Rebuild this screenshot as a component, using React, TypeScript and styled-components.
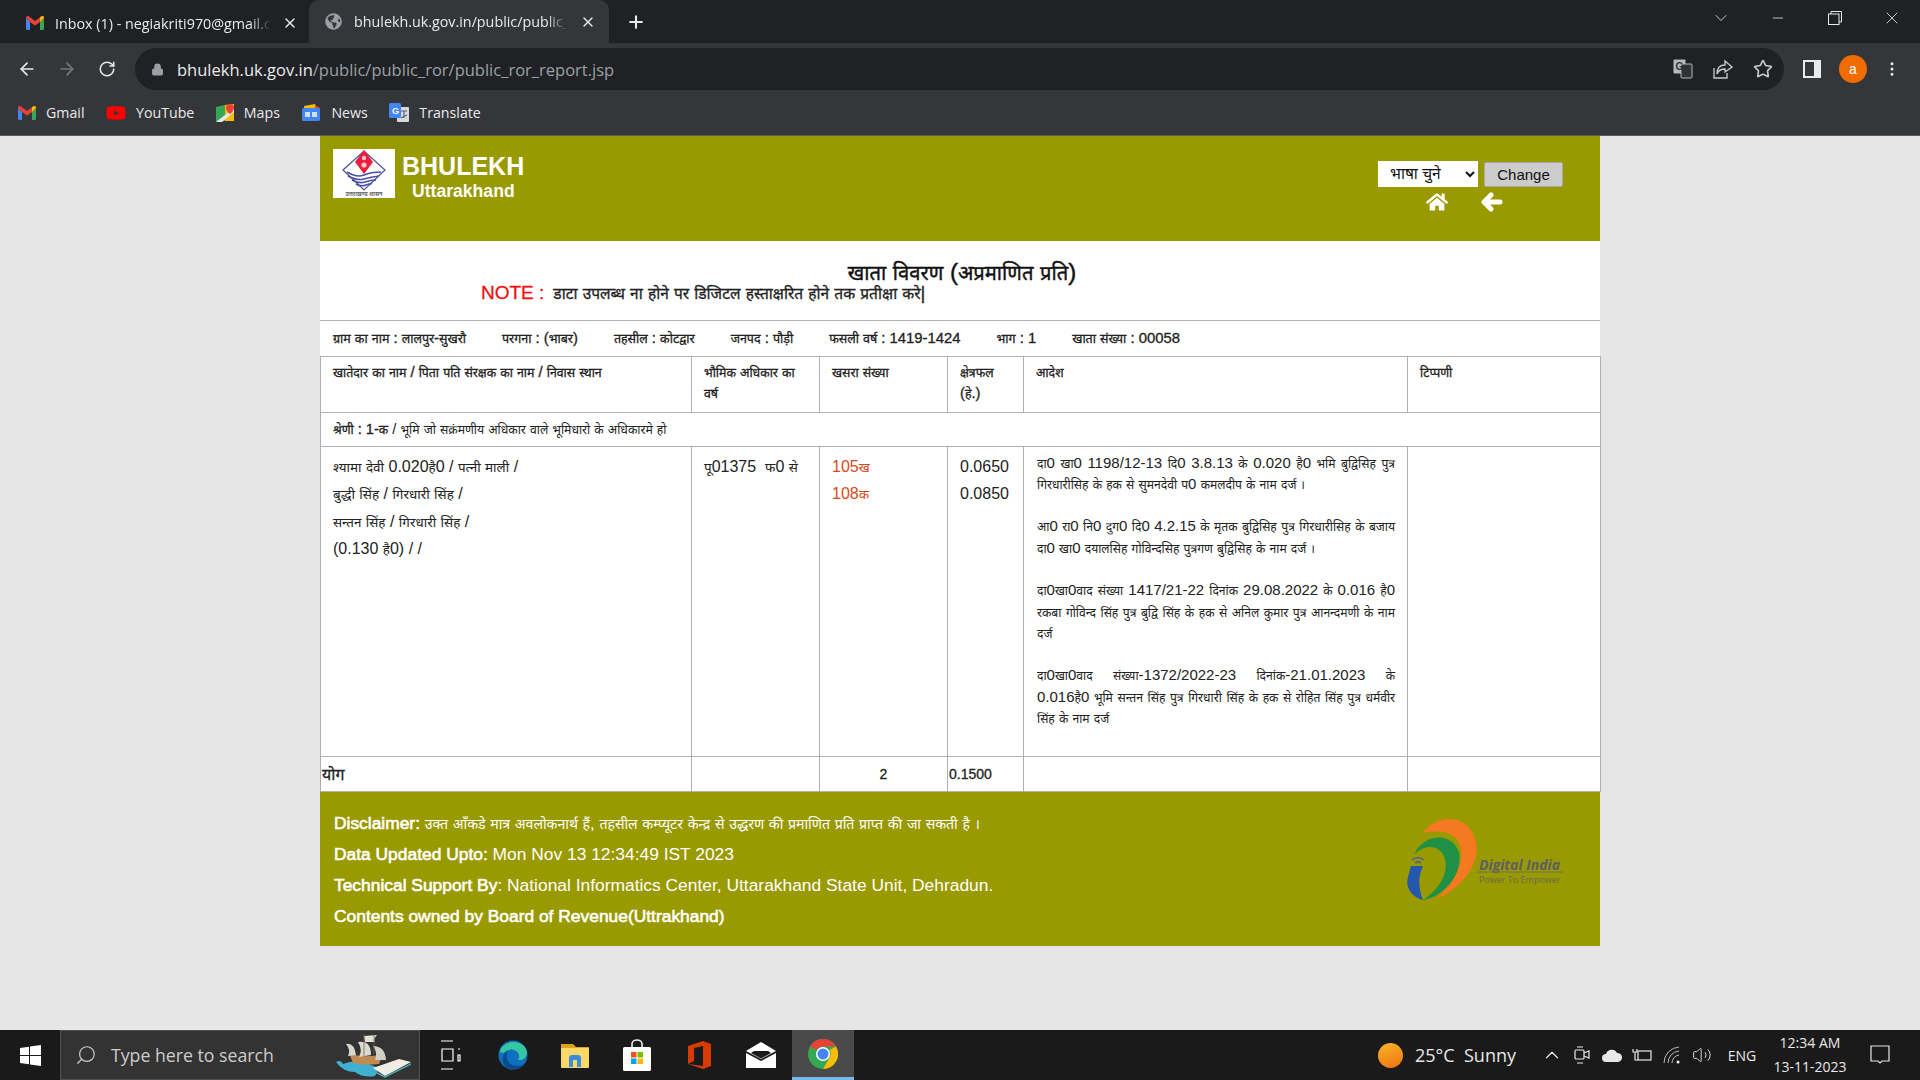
import React from "react";
import styled, { createGlobalStyle } from "styled-components";
import { ArrowLeft, ArrowRight, RotateCw, Star, X, Plus, ChevronDown, ChevronUp, Minus, Search, Lock, MoreVertical, Volume2 } from "lucide-react";
import { FaHome, FaYoutube, FaGlobeAmericas } from "react-icons/fa";

const OLIVE = "#999900";
const LINE = "#b0b0b0";
const HINDI = `"Liberation Sans", Arial, "Noto Sans Devanagari", "Lohit Devanagari", "Noto Sans", sans-serif`;
const UI = `"Open Sans", "Noto Sans", sans-serif`;

const Global = createGlobalStyle`
  html, body { margin: 0; padding: 0; height: 1080px; overflow: hidden; background: #e6e6e6; }
  * { box-sizing: border-box; }
`;

const Screen = styled.div`
  width: 1920px;
  height: 1080px;
  display: flex;
  flex-direction: column;
  font-family: ${HINDI};
`;

// the fallback Devanagari face runs wider than the one in the shot
const Deva = styled.span`
  font-size: 0.84em;
  line-height: 0;
`;

const Hi = ({ t }: { t: string }) => (
  <>
    {t.split(/([\u0900-\u097F]+)/).map((part, i) =>
      i % 2 ? <Deva key={i}>{part}</Deva> : part
    )}
  </>
);

/* browser frame */
const TabStrip = styled.div`
  height: 43px;
  background: #202124;
  display: flex;
  align-items: flex-end;
  color: #e8eaed;
  font-family: ${UI};
`;

const Tab = styled.div<{ $active?: boolean }>`
  width: ${(p) => (p.$active ? "300px" : "305px")};
  height: ${(p) => (p.$active ? "43px" : "40px")};
  margin-right: ${(p) => (p.$active ? "17px" : "4px")};
  display: flex;
  align-items: center;
  gap: ${(p) => (p.$active ? "12px" : "11px")};
  padding-left: ${(p) => (p.$active ? "16px" : "26px")};
  padding-right: ${(p) => (p.$active ? "13px" : "7px")};
  border-radius: 10px 10px 0 0;
  background: ${(p) => (p.$active ? "#35363a" : "transparent")};
  font-size: 14.3px;
`;

const TabTitle = styled.span`
  flex: 1;
  overflow: hidden;
  white-space: nowrap;
  -webkit-mask-image: linear-gradient(to right, #000 90%, transparent);
  mask-image: linear-gradient(to right, #000 90%, transparent);
`;

const StripSpacer = styled.div`
  flex: 1;
`;

const WindowControls = styled.div`
  height: 36px;
  align-self: flex-start;
  display: flex;
  align-items: center;
  color: #e8eaed;
`;

const WindowButton = styled.div`
  width: 57px;
  display: flex;
  justify-content: center;
`;

const Toolbar = styled.div`
  height: 48px;
  background: #35363a;
  display: flex;
  align-items: center;
  padding: 4px 0 0 7px;
  color: #e8eaed;
`;

const NavButton = styled.div<{ $dim?: boolean }>`
  width: 40px;
  display: flex;
  justify-content: center;
  color: ${(p) => (p.$dim ? "#75777b" : "#e8eaed")};
`;

const Omnibox = styled.div`
  width: 1649px;
  height: 42px;
  margin-left: 8px;
  border-radius: 21px;
  background: #202124;
  display: flex;
  align-items: center;
  padding: 0 1px 0 16px;
  gap: 13px;
  font-family: ${UI};
  font-size: 16.5px;
  color: #9aa0a6;
`;

const Url = styled.div`
  flex: 1;
  white-space: nowrap;
  & b {
    font-weight: 400;
    color: #e8eaed;
  }
`;

const OmniIcons = styled.div`
  display: flex;
`;

const OmniIcon = styled.div`
  width: 40px;
  display: flex;
  justify-content: center;
  color: #c4c7c5;
`;

const ToolbarEnd = styled.div`
  flex: 1;
  display: flex;
  align-items: center;
  padding-left: 19px;
`;

const Avatar = styled.div`
  width: 28px;
  height: 28px;
  margin: 0 16px 0 18px;
  border-radius: 50%;
  background: #f06c00;
  color: #fff;
  font-size: 14px;
  display: flex;
  align-items: center;
  justify-content: center;
`;

const BookmarkBar = styled.div`
  height: 44.5px;
  background: #35363a;
  border-bottom: 1px solid #5a5b5f;
  display: flex;
  align-items: center;
  padding-left: 18px;
  gap: 21.5px;
  color: #e8eaed;
  font-family: ${UI};
  font-size: 14.2px;
`;

const Bookmark = styled.div`
  display: flex;
  align-items: center;
  gap: 10px;
`;

/* page */
const Page = styled.main`
  flex: 1;
  display: flex;
  justify-content: center;
  background: #e6e6e6;
`;

const Sheet = styled.div`
  width: 1280px;
  align-self: flex-start;
  background: #fff;
`;

const Banner = styled.header`
  height: 105px;
  background: ${OLIVE};
  display: flex;
  justify-content: space-between;
  padding: 13px 37px 0 13px;
`;

const Brand = styled.div`
  display: flex;
  gap: 7px;
  color: #fff;
  font-weight: 700;
`;

const Crest = styled.div`
  width: 62px;
  height: 49px;
  background: #fff;
  display: flex;
  justify-content: center;
`;

const BrandName = styled.div`
  font-size: 25px;
  line-height: 30px;
  margin-top: 2px;
`;

const BrandState = styled.div`
  font-size: 17.6px;
  line-height: 20px;
  margin-left: 10px;
`;

const LangBlock = styled.div`
  width: 185px;
  padding-top: 12px;
`;

const LangRow = styled.div`
  display: flex;
  gap: 6px;
  align-items: flex-end;
`;

const LangSelect = styled.select`
  width: 100px;
  height: 26px;
  border: 0;
  background: #fff;
  color: #111;
  font-family: ${HINDI};
  font-size: 15.5px;
  padding-left: 8px;
`;

const ChangeButton = styled.button`
  width: 79px;
  height: 25px;
  padding: 0;
  background: #ccc;
  border: 1px solid #aaa;
  border-radius: 2px;
  color: #111;
  font-family: "Liberation Sans", sans-serif;
  font-size: 15px;
`;

const BannerIcons = styled.div`
  display: flex;
  align-items: center;
  gap: 33px;
  margin: 4px 0 0 48px;
  color: #fff;
  font-size: 22px;
`;

const TitleBlock = styled.section`
  height: 80px;
  padding-top: 19px;
  border-bottom: 1px solid ${LINE};
`;

const Title = styled.h1`
  margin: 0;
  padding-left: 4px;
  text-align: center;
  font-size: 24px;
  line-height: 24px;
  font-weight: 400;
  -webkit-text-stroke: 0.4px #111;
  color: #111;
`;

const Note = styled.div`
  padding-left: 161px;
  display: flex;
  align-items: center;
  gap: 9px;
  font-size: 18.5px;
  line-height: 18px;
  color: #222;
  -webkit-text-stroke: 0.3px #222;
  & b {
    font-weight: 400;
    color: #f01010;
    -webkit-text-stroke: 0.3px #f01010;
    font-size: 19px;
  }
`;

const InfoRow = styled.div`
  height: 35px;
  padding-left: 13px;
  display: flex;
  align-items: center;
  gap: 36px;
  font-size: 14.85px;
  color: #222;
  -webkit-text-stroke: 0.3px #222;
`;

const Grid = styled.table`
  width: 1280px;
  table-layout: fixed;
  border-collapse: collapse;
  color: #222;
`;

const HeadCell = styled.th<{ $w: number }>`
  width: ${(p) => p.$w}px;
  height: 56px;
  padding: 5px 12px;
  border: 1px solid ${LINE};
  vertical-align: top;
  text-align: left;
  font-size: 14.7px;
  line-height: 21px;
  font-weight: 400;
  -webkit-text-stroke: 0.3px #222;
`;

const CategoryCell = styled.td`
  height: 34px;
  padding: 0 12px;
  border: 1px solid ${LINE};
  font-size: 14.6px;
  & b {
    font-weight: 400;
    -webkit-text-stroke: 0.3px #222;
  }
`;

const BodyCell = styled.td<{ $accent?: boolean }>`
  height: 310px;
  padding: 6px 13px 6px 12px;
  border: 1px solid ${LINE};
  vertical-align: top;
  font-size: 16px;
  line-height: 27.5px;
  color: ${(p) => (p.$accent ? "#d9481c" : "#222")};
`;

const OrderCell = styled.td`
  padding: 5px 12px 5px 13px;
  border: 1px solid ${LINE};
  vertical-align: top;
  font-size: 15px;
  line-height: 21.3px;
  text-align: justify;
  color: #222;
`;

const OrderText = styled.p`
  margin: 0 0 21.3px;
  & span {
    font-size: 0.81em;
  }
`;

const TotalCell = styled.td<{ $center?: boolean; $tight?: boolean; $big?: boolean }>`
  height: 35px;
  padding: 0 ${(p) => (p.$tight ? "1px" : "12px")};
  border: 1px solid ${LINE};
  font-size: ${(p) => (p.$big ? "19px" : "14px")};
  font-weight: 400;
  -webkit-text-stroke: 0.3px #222;
  text-align: ${(p) => (p.$center ? "center" : "left")};
`;

const Footer = styled.footer`
  height: 154px;
  background: ${OLIVE};
  display: flex;
  justify-content: space-between;
  padding: 16px 37px 0 14px;
  color: #fff;
  font-size: 17.4px;
  line-height: 31.2px;
`;

const FooterNote = styled.div`
  & b {
    font-weight: 400;
    -webkit-text-stroke: 0.6px #fff;
  }
`;

const Disclaimer = styled.span`
  font-size: 0.965em;
`;

const DigitalLogo = styled.svg`
  width: 156px;
  height: 84px;
  margin-top: 9px;
`;

/* taskbar */
const Taskbar = styled.div`
  height: 50px;
  background: #1a1a1a;
  display: flex;
  align-items: stretch;
  color: #e8e8e8;
  font-family: ${UI};
`;

const StartButton = styled.div`
  width: 60px;
  display: flex;
  align-items: center;
  justify-content: center;
`;

const SearchBox = styled.div`
  width: 360px;
  background: #333;
  border: 1px solid #505050;
  display: flex;
  align-items: center;
  padding: 0 8px 0 14px;
  gap: 14px;
  color: #ccc;
  font-size: 17.7px;
`;

const SearchHint = styled.span`
  flex: 1;
`;

const TaskSlot = styled.div<{ $active?: boolean }>`
  width: 62px;
  display: flex;
  align-items: center;
  justify-content: center;
  background: ${(p) => (p.$active ? "#4a4a4a" : "transparent")};
  border-bottom: ${(p) => (p.$active ? "3px solid #76b9ed" : "0")};
`;

const Tray = styled.div`
  flex: 1;
  display: flex;
  align-items: center;
  padding-left: 524px;
`;

const TrayWeather = styled.div`
  display: flex;
  align-items: center;
  width: 159px;
  font-size: 18px;
  gap: 12px;
`;

const Sun = styled.div`
  width: 25px;
  height: 25px;
  border-radius: 50%;
  background: linear-gradient(160deg, #f5b82a, #f0700f);
`;

const TrayIcon = styled.div`
  width: 30px;
  display: flex;
  justify-content: center;
  color: #e8e8e8;
`;

const TrayLang = styled.div`
  width: 50px;
  text-align: center;
  font-size: 14px;
`;

const Clock = styled.div`
  width: 86px;
  text-align: center;
  font-size: 14px;
  line-height: 24px;
`;

const Notify = styled.div`
  margin-left: 17px;
  display: flex;
`;

const GmailMark = () => (
  <svg width="18" height="14" viewBox="0 0 18 14">
    <path d="M0 2 V12.5 Q0 14 1.5 14 H4 V6 Z" fill="#4285f4" />
    <path d="M18 2 V12.5 Q18 14 16.5 14 H14 V6 Z" fill="#34a853" />
    <path d="M0 2 Q0 -1 3 .5 L9 5 L15 .5 Q18 -1 18 2 L14 6 L9 9.5 L4 6 Z" fill="#ea4335" />
    <path d="M14 1.5 L15 .5 Q18 -1 18 2 L14 6 Z" fill="#fbbc04" />
  </svg>
);

const MapsMark = () => (
  <svg width="18" height="18" viewBox="0 0 18 18">
    <path d="M0 3 L9 1 V17 L0 18 Z" fill="#34a853" />
    <path d="M9 1 L18 0 V17 L9 17 Z" fill="#fbbc04" />
    <path d="M0 18 L18 4 V8 L6 18 Z" fill="#e8eaed" />
    <path d="M14 0 a4 4 0 0 1 4 4 c0 3 -4 6 -4 6 s-4 -3 -4 -6 a4 4 0 0 1 4 -4" fill="#ea4335" />
  </svg>
);

const NewsMark = () => (
  <svg width="20" height="18" viewBox="0 0 20 18">
    <path d="M3 2 L14 0 L16 4 H3 Z" fill="#fbbc04" />
    <path d="M14 1 L19 4 V8 H14 Z" fill="#ea4335" />
    <rect x="1" y="4" width="18" height="13" rx="1.5" fill="#4285f4" />
    <rect x="4" y="8" width="5" height="5" fill="#cfe0fb" />
    <rect x="11" y="8" width="5" height="5" fill="#cfe0fb" />
  </svg>
);

const TranslateMark = () => (
  <svg width="20" height="20" viewBox="0 0 20 20">
    <rect x="8" y="4" width="12" height="15" rx="1" fill="#d5d8dc" />
    <rect x="0" y="0" width="12" height="15" rx="1.5" fill="#4285f4" />
    <text x="3" y="11" fontSize="9" fontWeight="700" fill="#fff" fontFamily="Liberation Sans">G</text>
    <path d="M12 8 H18 M15 8 V15 M12 15 L18 12" stroke="#5f6368" strokeWidth="1.2" fill="none" />
  </svg>
);

const CrestMark = () => (
  <svg width="62" height="49" viewBox="0 0 62 49">
    <path d="M10 21 L31 2 L52 21 L31 41 Z" fill="none" stroke="#4a4f9a" strokeWidth="1.2" />
    <path d="M31 1 L40 13 L31 25 L22 13 Z" fill="#ee1c3a" />
    <circle cx="31" cy="9" r="2.2" fill="#f9c8cc" />
    <circle cx="31" cy="16" r="2.6" fill="#f9c8cc" />
    <path d="M14 23 Q24 29 31 26 T48 23 M15 27 Q24 32 31 30 T46 27 M19 31 Q26 35 32 33 T43 31 M23 35 Q28 38 33 36 T39 35" stroke="#4a4fa8" strokeWidth="1.6" fill="none" />
    <text x="31" y="47" textAnchor="middle" fontSize="5.5" fill="#666">उत्तराखण्ड शासन</text>
  </svg>
);

const BackArrow = () => (
  <svg width="22" height="20" viewBox="0 0 22 20" fill="none" stroke="#fff" strokeWidth="5" strokeLinecap="round" strokeLinejoin="round">
    <path d="M10 3 L3 10 L10 17 M4 10 H19" />
  </svg>
);

const WinLogo = () => (
  <svg width="21" height="21" viewBox="0 0 21 21" fill="#fff">
    <path d="M0 3 L9 1.7 V10 H0 Z M10 1.5 L21 0 V10 H10 Z M0 11 H9 V19.3 L0 18 Z M10 11 H21 V21 L10 19.5 Z" />
  </svg>
);

const ShipArt = () => (
  <svg width="78" height="46" viewBox="0 0 78 46">
    <path d="M3 30 Q8 27 10 32 Q20 28 30 30 L46 36 L42 44 Q30 46 22 40 Q10 40 3 30 Z" fill="#3fb0cf" />
    <path d="M16 21 Q30 27 50 22 L46 32 Q30 34 20 31 Z" fill="#c08a55" />
    <path d="M13 12 Q21 10 23 23 L15 24 Q18 18 13 12 Z" fill="#d8d5cc" />
    <path d="M25 10 Q38 8 38 23 L26 25 Q30 18 25 10 Z" fill="#dcd9d0" />
    <path d="M40 14 Q52 14 53 28 L42 28 Q45 21 40 14 Z" fill="#d2cfc6" />
    <path d="M31 4 L44 3 Q40 7 42 10 L32 10 Z" fill="#e4e1d8" />
    <path d="M31 2 V24 M41 3 V22" stroke="#7a6248" strokeWidth="0.8" />
    <path d="M40 36 L66 27 L78 30 L52 44 Z" fill="#f0eee2" />
    <path d="M42 40 L52 45 L78 32" stroke="#4fa8b8" strokeWidth="1.5" fill="none" />
  </svg>
);

const TaskViewIcon = () => (
  <svg width="24" height="32" viewBox="0 0 24 32" fill="none" stroke="#fff" strokeWidth="1.2">
    <path d="M2 2 H14 M2 30 H14 M3 10 H14 V22 H3 Z M19 10 H21 M19 16 H21 V22 H19 Z" />
  </svg>
);

const EdgeIcon = () => (
  <svg width="30" height="30" viewBox="0 0 30 30">
    <circle cx="15" cy="15" r="14.5" fill="#0f70bf" />
    <path d="M2 11 C5 1 22 -2 28 9 C31 16 26 21 20 20 C24 14 17 8 11 10 C6 12 4 15 2 11 Z" fill="#37c6a2" />
    <path d="M9 17 C9 25 18 28 26 24 C22 30 12 31 7 26 C3 21 4 14 10 10 C8 13 9 15 9 17 Z" fill="#0a4c8f" />
  </svg>
);

const FolderIcon = () => (
  <svg width="28" height="26" viewBox="0 0 28 26">
    <path d="M0 2 H12 L15 5 H28 V24 H0 Z" fill="#dfa218" />
    <rect x="0" y="6" width="28" height="20" rx="1" fill="#fbd968" />
    <path d="M8 25 V16 Q8 13 11 13 H17 Q20 13 20 16 V25 H16 V18 H12 V25 Z" fill="#3a8dde" />
  </svg>
);

const StoreIcon = () => (
  <svg width="28" height="32" viewBox="0 0 28 32">
    <path d="M9 8 V5 a5 4 0 0 1 10 0 V8" fill="none" stroke="#eee" strokeWidth="1.6" />
    <rect x="0" y="8" width="28" height="24" rx="1.5" fill="#fff" />
    <rect x="8" y="13" width="5.5" height="5.5" fill="#f25022" />
    <rect x="14.5" y="13" width="5.5" height="5.5" fill="#7fba00" />
    <rect x="8" y="19.5" width="5.5" height="5.5" fill="#00a4ef" />
    <rect x="14.5" y="19.5" width="5.5" height="5.5" fill="#ffb900" />
  </svg>
);

const OfficeIcon = () => (
  <svg width="23" height="28" viewBox="0 0 23 28">
    <path d="M0 5 L15 0 L23 3 V25 L15 28 L0 23 L15 25 V5 L6 7 V20 L0 23 Z" fill="#d83b01" />
  </svg>
);

const MailIcon = () => (
  <svg width="30" height="26" viewBox="0 0 30 26">
    <path d="M0 9 L15 0 L30 9 L15 17 Z" fill="#fff" />
    <path d="M0 11 L15 19 L30 11 V26 H0 Z" fill="#fff" />
    <path d="M5 11 L15 16.5 L25 11 L22 9 H8 Z" fill="#1a1a1a" />
  </svg>
);

const ChromeIcon = () => (
  <svg width="30" height="30" viewBox="0 0 30 30">
    <circle cx="15" cy="15" r="15" fill="#34a853" />
    <path d="M15 0 A15 15 0 0 1 28 7.5 H15 A7.5 7.5 0 0 0 8.5 11.2 L2 7.5 A15 15 0 0 1 15 0 Z" fill="#ea4335" />
    <path d="M28 7.5 A15 15 0 0 1 15 30 L21.5 18.7 A7.5 7.5 0 0 0 21.5 11 L28 7.5 Z" fill="#fbbc04" />
    <circle cx="15" cy="15" r="7" fill="#fff" />
    <circle cx="15" cy="15" r="5.5" fill="#4285f4" />
  </svg>
);

export default function App() {
  return (
    <Screen>
      <Global />
      <TabStrip>
        <Tab>
          <GmailMark />
          <TabTitle>Inbox (1) - negiakriti970@gmail.com</TabTitle>
          <X size={16} />
        </Tab>
        <Tab $active>
          <FaGlobeAmericas size={17} color="#9aa0a6" />
          <TabTitle>bhulekh.uk.gov.in/public/public_ror/</TabTitle>
          <X size={16} />
        </Tab>
        <Plus size={20} strokeWidth={2.5} style={{ marginBottom: 11 }} />
        <StripSpacer />
        <WindowControls>
          <WindowButton><ChevronDown size={20} strokeWidth={1} /></WindowButton>
          <WindowButton><Minus size={16} strokeWidth={1.2} /></WindowButton>
          <WindowButton>
            <svg width="14" height="14" viewBox="0 0 14 14" fill="none" stroke="#e8eaed">
              <rect x="0.5" y="3" width="10.5" height="10.5" />
              <path d="M3 3 V0.5 H13.5 V11 H11" />
            </svg>
          </WindowButton>
          <WindowButton><X size={20} strokeWidth={1} /></WindowButton>
        </WindowControls>
      </TabStrip>
      <Toolbar>
        <NavButton><ArrowLeft size={20} /></NavButton>
        <NavButton $dim><ArrowRight size={20} /></NavButton>
        <NavButton><RotateCw size={18} /></NavButton>
        <Omnibox>
          <Lock size={13} fill="#9aa0a6" />
          <Url><b>bhulekh.uk.gov.in</b>/public/public_ror/public_ror_report.jsp</Url>
          <OmniIcons>
            <OmniIcon>
              <svg width="20" height="20" viewBox="0 0 20 20">
                <rect x="0.5" y="0.5" width="12" height="14" rx="1" fill="#b5b8bc" />
                <rect x="8" y="5" width="11" height="14" rx="1" fill="#303134" stroke="#b5b8bc" />
                <text x="2.5" y="11" fontSize="10" fontWeight="700" fill="#303134" fontFamily="Liberation Sans">G</text>
              </svg>
            </OmniIcon>
            <OmniIcon>
              <svg width="20" height="20" viewBox="0 0 20 20" fill="none" stroke="#c4c7c5" strokeWidth="1.4">
                <path d="M1 9 V19 H14 V14" />
                <path d="M12 2 L19 8 L12 13 V10 Q6 10 4 15 Q4 6 12 6 Z" />
              </svg>
            </OmniIcon>
            <OmniIcon><Star size={20} strokeWidth={2} /></OmniIcon>
          </OmniIcons>
        </Omnibox>
        <ToolbarEnd>
          <svg width="18" height="18" viewBox="0 0 18 18">
            <rect width="18" height="18" fill="#e8eaed" />
            <rect x="2" y="2" width="9" height="14" fill="#35363a" />
          </svg>
          <Avatar>a</Avatar>
          <MoreVertical size={18} />
        </ToolbarEnd>
      </Toolbar>
      <BookmarkBar>
        <Bookmark><GmailMark />Gmail</Bookmark>
        <Bookmark><FaYoutube size={20} color="#f00" />YouTube</Bookmark>
        <Bookmark><MapsMark />Maps</Bookmark>
        <Bookmark><NewsMark />News</Bookmark>
        <Bookmark><TranslateMark />Translate</Bookmark>
      </BookmarkBar>

      <Page>
        <Sheet>
          <Banner>
            <Brand>
              <Crest><CrestMark /></Crest>
              <div>
                <BrandName>BHULEKH</BrandName>
                <BrandState>Uttarakhand</BrandState>
              </div>
            </Brand>
            <LangBlock>
              <LangRow>
                <LangSelect><option>भाषा चुने</option></LangSelect>
                <ChangeButton>Change</ChangeButton>
              </LangRow>
              <BannerIcons><FaHome /><BackArrow /></BannerIcons>
            </LangBlock>
          </Banner>

          <TitleBlock>
            <Title><Hi t="खाता विवरण (अप्रमाणित प्रति)" /></Title>
            <Note><b>NOTE :</b> <span><Hi t="डाटा उपलब्ध ना होने पर डिजिटल हस्ताक्षरित होने तक प्रतीक्षा करे|" /></span></Note>
          </TitleBlock>

          <InfoRow>
            <span><Hi t="ग्राम का नाम : लालपुर-सुखरौ" /></span>
            <span><Hi t="परगना : (भाबर)" /></span>
            <span><Hi t="तहसील : कोटद्वार" /></span>
            <span><Hi t="जनपद : पौड़ी" /></span>
            <span><Hi t="फसली वर्ष : 1419-1424" /></span>
            <span><Hi t="भाग : 1" /></span>
            <span><Hi t="खाता संख्या : 00058" /></span>
          </InfoRow>

          <Grid>
            <thead>
              <tr>
                <HeadCell $w={371}><Hi t="खातेदार का नाम / पिता पति संरक्षक का नाम / निवास स्थान" /></HeadCell>
                <HeadCell $w={128}><Hi t="भौमिक अधिकार का वर्ष" /></HeadCell>
                <HeadCell $w={128}><Hi t="खसरा संख्या" /></HeadCell>
                <HeadCell $w={76}><Hi t="क्षेत्रफल (हे.)" /></HeadCell>
                <HeadCell $w={384}><Hi t="आदेश" /></HeadCell>
                <HeadCell $w={193}><Hi t="टिप्पणी" /></HeadCell>
              </tr>
            </thead>
            <tbody>
              <tr>
                <CategoryCell colSpan={6}><b><Hi t="श्रेणी : 1-क" /></b> <Hi t="/ भूमि जो सक्रंमणीय अधिकार वाले भूमिधारो के अधिकारमे हो" /></CategoryCell>
              </tr>
              <tr>
                <BodyCell>
                  <Hi t="श्यामा देवी 0.020है0 / पत्नी माली /" /><br />
                  <Hi t="बुद्धी सिंह / गिरधारी सिंह /" /><br />
                  <Hi t="सन्तन सिंह / गिरधारी सिंह /" /><br />
                  <Hi t="(0.130 है0) / /" />
                </BodyCell>
                <BodyCell><Hi t={"पू01375 \u00a0फ0 से"} /></BodyCell>
                <BodyCell $accent><Hi t="105ख" /><br /><Hi t="108क" /></BodyCell>
                <BodyCell>0.0650<br />0.0850</BodyCell>
                <OrderCell>
                  <OrderText><Hi t="दा0 खा0 1198/12-13 दि0 3.8.13 के 0.020 है0 भमि बुद्विसिह पुत्र गिरधारीसिह के हक से सुमनदेवी प0 कमलदीप के नाम दर्ज ।" /></OrderText>
                  <OrderText><Hi t="आ0 रा0 नि0 दुग0 दि0 4.2.15 के मृतक बुद्विसिह पुत्र गिरधारीसिह के बजाय दा0 खा0 दयालसिह गोविन्दसिह पुत्रगण बुद्विसिह के नाम दर्ज ।" /></OrderText>
                  <OrderText><Hi t="दा0खा0वाद संख्या 1417/21-22 दिनांक 29.08.2022 के 0.016 है0 रकबा गोविन्द सिंह पुत्र बुद्वि सिंह के हक से अनिल कुमार पुत्र आनन्दमणी के नाम दर्ज" /></OrderText>
                  <OrderText><Hi t="दा0खा0वाद संख्या-1372/2022-23 दिनांक-21.01.2023 के 0.016है0 भूमि सन्तन सिंह पुत्र गिरधारी सिंह के हक से रोहित सिंह पुत्र धर्मवीर सिंह के नाम दर्ज" /></OrderText>
                </OrderCell>
                <BodyCell />
              </tr>
              <tr>
                <TotalCell $tight $big><Hi t="योग" /></TotalCell>
                <TotalCell />
                <TotalCell $center>2</TotalCell>
                <TotalCell $tight>0.1500</TotalCell>
                <TotalCell />
                <TotalCell />
              </tr>
            </tbody>
          </Grid>

          <Footer>
            <FooterNote>
              <b>Disclaimer:</b> <Disclaimer><Hi t="उक्त आँकडे मात्र अवलोकनार्थ हैं, तहसील कम्प्यूटर केन्द्र से उद्धरण की प्रमाणित प्रति प्राप्त की जा सकती है ।" /></Disclaimer><br />
              <b>Data Updated Upto:</b> Mon Nov 13 12:34:49 IST 2023<br />
              <b>Technical Support By</b>: National Informatics Center, Uttarakhand State Unit, Dehradun.<br />
              <b>Contents owned by Board of Revenue(Uttrakhand)</b>
            </FooterNote>
            <DigitalLogo viewBox="0 0 156 84">
              <path d="M16 16 C30 -4 62 -4 69 25 C74 50 50 75 28 82 C46 68 56 50 54 32 C51 16 36 12 16 16 Z" fill="#f47920" />
              <path d="M7 38 C16 16 46 14 52 36 C56 58 36 80 16 83 C30 74 42 58 38 42 C34 28 18 26 7 38 Z" fill="#1f9146" />
              <path d="M4 49 H16 C12 58 10 68 16 83 C4 80 -2 70 1 60 Z" fill="#2458ad" />
              <path d="M5 43 a9 9 0 0 1 12 0 M8 46 a5 5 0 0 1 6 0" stroke="#5f6f6a" strokeWidth="2" fill="none" />
              <text x="72" y="53" fontSize="14" fontWeight="700" fontStyle="italic" fill="#5d5f63" fontFamily="Open Sans">Digital India</text>
              <path d="M70 55 H156" stroke="#70705a" strokeWidth="1" />
              <text x="72" y="66" fontSize="9" fill="#6b6b4e" fontFamily="Open Sans">Power To Empower</text>
            </DigitalLogo>
          </Footer>
        </Sheet>
      </Page>

      <Taskbar>
        <StartButton><WinLogo /></StartButton>
        <SearchBox>
          <Search size={22} strokeWidth={1.3} style={{ transform: "scaleX(-1)" }} />
          <SearchHint>Type here to search</SearchHint>
          <ShipArt />
        </SearchBox>
        <TaskSlot><TaskViewIcon /></TaskSlot>
        <TaskSlot><EdgeIcon /></TaskSlot>
        <TaskSlot><FolderIcon /></TaskSlot>
        <TaskSlot><StoreIcon /></TaskSlot>
        <TaskSlot><OfficeIcon /></TaskSlot>
        <TaskSlot><MailIcon /></TaskSlot>
        <TaskSlot $active><ChromeIcon /></TaskSlot>
        <Tray>
          <TrayWeather><Sun /><span>25°C &nbsp;Sunny</span></TrayWeather>
          <TrayIcon><ChevronUp size={22} strokeWidth={1.3} /></TrayIcon>
          <TrayIcon>
            <svg width="16" height="20" viewBox="0 0 16 20" fill="none" stroke="#e8e8e8" strokeWidth="1.2">
              <rect x="1" y="5" width="9" height="9" rx="1" />
              <path d="M10 8 L15 6 V13 L10 11 M3 2 H9 M3 18 H9" />
            </svg>
          </TrayIcon>
          <TrayIcon>
            <svg width="20" height="13" viewBox="0 0 20 13" fill="#e8e8e8">
              <path d="M4 13 a4 4 0 0 1 0 -8 a6 6 0 0 1 11 -1 a4.5 4.5 0 0 1 1 9 Z" />
            </svg>
          </TrayIcon>
          <TrayIcon>
            <svg width="20" height="14" viewBox="0 0 20 14" fill="none" stroke="#e8e8e8" strokeWidth="1.2">
              <rect x="6" y="3" width="13" height="9" />
              <path d="M1 1 V4 H5 V1 M3 4 V12 H6" />
            </svg>
          </TrayIcon>
          <TrayIcon>
            <svg width="18" height="18" viewBox="0 0 18 18" fill="none" stroke="#bbb" strokeWidth="1">
              <path d="M1 17 A16 16 0 0 1 16 1 M5 17 A12 12 0 0 1 16 5 M9 17 A8 8 0 0 1 16 9" />
              <circle cx="15" cy="16" r="1.5" fill="#fff" stroke="none" />
            </svg>
          </TrayIcon>
          <TrayIcon><Volume2 size={20} strokeWidth={1.1} /></TrayIcon>
          <TrayLang>ENG</TrayLang>
          <Clock>12:34 AM<br />13-11-2023</Clock>
          <Notify>
            <svg width="20" height="20" viewBox="0 0 20 20" fill="none" stroke="#e8e8e8" strokeWidth="1.2">
              <path d="M1 1 H19 V16 H12 L10 18 L8 16 H1 Z" />
            </svg>
          </Notify>
        </Tray>
      </Taskbar>
    </Screen>
  );
}
